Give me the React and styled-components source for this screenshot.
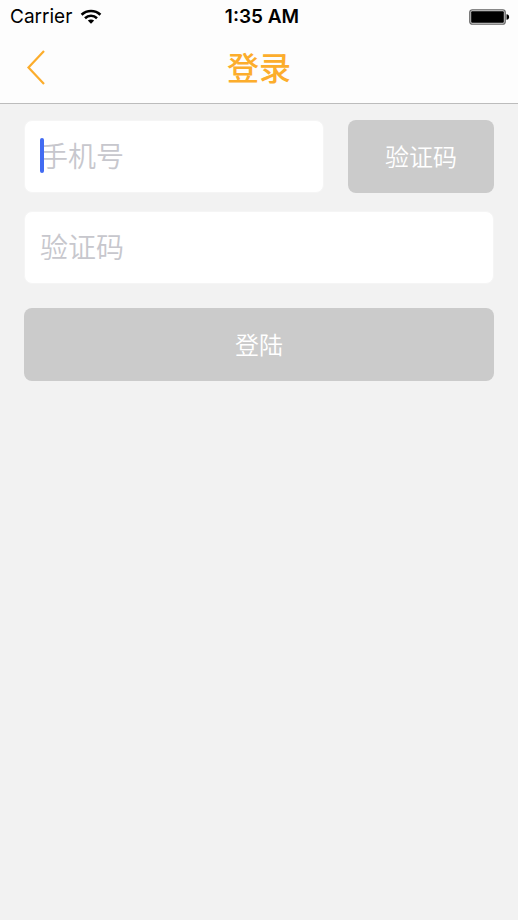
import React, { useState } from 'react';
import styled, { createGlobalStyle } from 'styled-components';

const GlobalStyle = createGlobalStyle`
  * {
    box-sizing: border-box;
  }

  body {
    margin: 0;
    background: #f2f2f2;
    font-family: Inter, "Noto Sans CJK SC", sans-serif;
  }
`;

const Page = styled.div`
  display: flex;
  flex-direction: column;
  min-height: 100vh;
`;

const Header = styled.header`
  background: #fdfdfd;
  border-bottom: 1px solid #bcbcbc;
`;

const StatusBar = styled.div`
  display: grid;
  grid-template-columns: 1fr auto 1fr;
  align-items: center;
  height: 33px;
  padding: 0 8px 0 10px;
  color: #000;
  font-size: 19px;
  line-height: 24px;
`;

const Carrier = styled.div`
  display: flex;
  align-items: center;
  gap: 8px;
`;

const Time = styled.time`
  padding-left: 4px;
  font-weight: 600;
`;

const Battery = styled.svg`
  justify-self: end;
`;

const NavBar = styled.nav`
  display: grid;
  grid-template-columns: 1fr auto 1fr;
  align-items: center;
  height: 70px;
  padding: 0 24px;
`;

const BackButton = styled.button`
  display: flex;
  justify-self: start;
  padding: 0;
  border: 0;
  background: none;
  color: #fcad2c;
  cursor: pointer;
`;

const Title = styled.h1`
  margin: 0;
  padding-bottom: 5px;
  color: #fcad2c;
  font-family: "Noto Sans CJK SC", sans-serif;
  font-size: 32px;
  font-weight: 500;
  line-height: 40px;
`;

const Form = styled.form`
  display: flex;
  flex-direction: column;
  padding: 16px 24px;
`;

const Row = styled.div`
  display: flex;
  gap: 24px;
  margin-bottom: ${({ $space }) => $space}px;
`;

const Field = styled.label`
  position: relative;
  flex: 1;
  min-width: 0;
`;

const Input = styled.input`
  display: block;
  width: 100%;
  height: 73px;
  padding: 0 15px 4px;
  border: 1px solid #f5f5f5;
  border-radius: 8px;
  outline: none;
  background: #fff;
  color: #333;
  font-family: "Noto Sans CJK SC", sans-serif;
  font-size: 28px;
  font-weight: 350;

  &::placeholder {
    color: #c7c7cd;
    opacity: 1;
  }
`;

const Caret = styled.span`
  position: absolute;
  top: 18px;
  left: 16px;
  width: 4px;
  height: 35px;
  border-radius: 2px;
  background: #426bf2;
  pointer-events: none;
`;

const Button = styled.button`
  flex: ${({ $wide }) => ($wide ? '1' : '0 0 146px')};
  height: 73px;
  padding: 0 0 2px;
  border: 0;
  border-radius: 8px;
  background: #cbcbcb;
  color: #fff;
  font-family: "Noto Sans CJK SC", sans-serif;
  font-size: 24px;
  font-weight: 350;
  cursor: pointer;
`;

const WifiIcon = () => (
  <svg width="22" height="16" viewBox="0 0 22 16" aria-hidden="true">
    <g fill="none" stroke="#000" strokeWidth="2.6">
      <path d="M1.6 5.7C6.8 0.7 15.2 0.7 20.4 5.7" />
      <path d="M5 9.2C8.4 6 13.6 6 17 9.2" />
    </g>
    <path d="M7.8 11.5C9.6 10 12.4 10 14.2 11.5L11 14.8Z" />
  </svg>
);

const BatteryIcon = () => (
  <Battery width="41" height="16" viewBox="0 0 41 16" aria-hidden="true">
    <rect x="0.75" y="0.75" width="35.5" height="14.5" rx="2.5" fill="#ccc" stroke="#666" strokeWidth="1.2" />
    <rect x="2.2" y="2.2" width="32.6" height="11.6" rx="1" />
    <path d="M37.5 5.2C41 5.2 41 10.8 37.5 10.8Z" />
  </Battery>
);

const App = () => {
  const [phone, setPhone] = useState('');
  const [code, setCode] = useState('');

  return (
    <Page>
      <GlobalStyle />
      <Header>
        <StatusBar>
          <Carrier>
            <span>Carrier</span>
            <WifiIcon />
          </Carrier>
          <Time>1:35 AM</Time>
          <BatteryIcon />
        </StatusBar>
        <NavBar>
          <BackButton type="button" aria-label="返回">
            <svg width="24" height="36" viewBox="0 0 24 36" fill="none" aria-hidden="true">
              <path d="M20 1L4.5 17.5L20 34" stroke="currentColor" strokeWidth="2.2" />
            </svg>
          </BackButton>
          <Title>登录</Title>
        </NavBar>
      </Header>
      <Form onSubmit={(e) => e.preventDefault()}>
        <Row $space={18}>
          <Field>
            <Input
              type="tel"
              aria-label="手机号"
              placeholder="手机号"
              value={phone}
              onChange={(e) => setPhone(e.target.value)}
            />
            {!phone && <Caret />}
          </Field>
          <Button type="button">验证码</Button>
        </Row>
        <Row $space={24}>
          <Field>
            <Input
              type="text"
              aria-label="验证码"
              placeholder="验证码"
              value={code}
              onChange={(e) => setCode(e.target.value)}
            />
          </Field>
        </Row>
        <Row $space={0}>
          <Button type="submit" $wide>登陆</Button>
        </Row>
      </Form>
    </Page>
  );
};

export default App;
